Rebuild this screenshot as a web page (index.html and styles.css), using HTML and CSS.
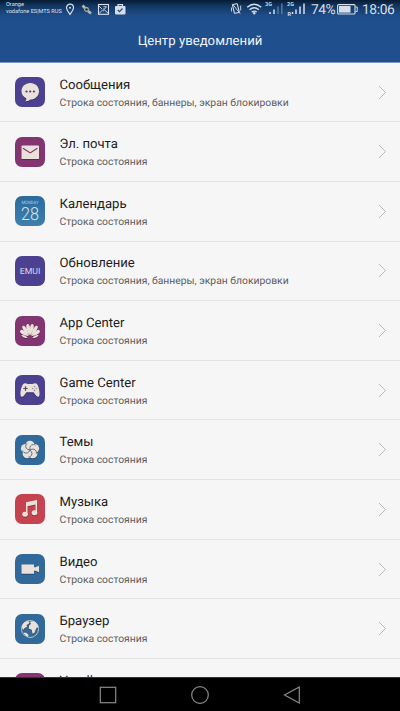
FILE: index.html
```html
<!DOCTYPE html>
<html lang="ru">
<head>
<meta charset="utf-8">
<title>Центр уведомлений</title>
<link rel="stylesheet" href="styles.css">
</head>
<body>
<div class="phone">
  <header class="header">
    <div class="status">
      <div class="carrier"><span>Orange</span><span>vodafone ES|MTS RUS</span></div>
      <svg class="left-icons" width="64" height="16" viewBox="0 0 64 16" fill="none" stroke="#d5deea">
        <path d="M5 13.500C3.300 11 1.500 9 1.500 6.700a3.500 3.500 0 0 1 7 0C8.500 9 6.700 11 5 13.500z" stroke-width="1.200"/>
        <circle cx="5" cy="6.700" r="1" fill="#d5deea" stroke="none"/>
        <path d="M17.500 4.500l2.500 2.500M23 10l3 2.500" stroke="#b9b6ad" stroke-width="2.600"/>
        <circle cx="21.500" cy="8.500" r="1.900" fill="#242e3d" stroke="#b9b6ad" stroke-width="1.100"/>
        <rect x="33.500" y="3.500" width="10" height="9.800" stroke-width="1.100"/>
        <path d="M34 12.500l3.500-3.500 1.500 1.200M39 8.500l4 3.500M34 5l3 3M38 8h1.500l2-2.300h-3" stroke-width=".9"/>
        <rect x="50" y="5" width="10.500" height="8.500" rx="1" fill="#d5deea" stroke="none"/>
        <path d="M53 5V3.700h4.500V5" stroke-width="1.200"/>
        <path d="M52.800 9l1.700 1.700 3-3.200" stroke="#204b85" stroke-width="1.200"/>
      </svg>
      <svg class="right-icons" width="78" height="18" viewBox="0 0 78 18" fill="none" stroke="#d5deea">
        <rect x="3.500" y="4" width="5" height="9" rx="1" transform="rotate(-14 6 9)" stroke-width="1.100"/>
        <path d="M1.500 7.500v4M10.700 5.500v5M2.300 3.800l8 10" stroke-width=".9"/>
        <path d="M17.200 7.300q7-6 14 0M19.500 9.800q4.700-4 9.400 0M21.800 12.100q2.400-2 4.800 0" stroke-width="1.400"/>
        <circle cx="24.200" cy="13.300" r="1.200" fill="#d5deea" stroke="none"/>
        <g stroke-width="1.500"><path d="M40 14v-2M44 14V9.500"/><path d="M48 14V6.500M51.800 14V3.500" stroke="#5578a3"/>
        <path d="M62.500 14v-2M66 14V9.500M70 14V6.500M74 14V3.500"/></g>
        <g class="net"><text x="35" y="6">3G</text><text x="57" y="6">2G</text><text x="57.500" y="15.500">R</text></g>
      </svg>
      <span class="percent">74%</span>
      <svg class="battery" width="21" height="12" viewBox="0 0 21 12"><rect x=".6" y="1.600" width="17.400" height="9.400" rx="1" fill="none" stroke="#d5deea" stroke-width="1.100"/><path d="M2 3h11.500v6.600H2z" fill="#d5deea"/><path d="M18.500 4h1.700v4.500h-1.700" fill="none" stroke="#d5deea"/></svg>
      <span class="clock">18:06</span>
    </div>
    <h1 class="title">Центр уведомлений</h1>
  </header>

  <main class="list">
    <div class="row">
      <svg class="app violet" viewBox="0 0 30 30"><path class="art" d="M15.300 6c5 0 8.700 3.600 8.700 8.200s-3.900 8.300-8.700 8.300c-1 1-3 2-5 1.700 1-1 1.200-2 .9-3C8.300 19.800 6.500 17.300 6.500 14.200 6.500 9.600 10.300 6 15.300 6z"/><g fill="#463b75"><circle cx="11.500" cy="14.500" r="1.100"/><circle cx="15.200" cy="14.500" r="1.100"/><circle cx="18.900" cy="14.500" r="1.100"/></g></svg>
      <div class="text"><div class="name">Сообщения</div><div class="desc">Строка состояния, баннеры, экран блокировки</div></div>
      <svg class="arrow" viewBox="0 0 9 15"><path d="M1 1l6.500 6.500L1 14"/></svg>
    </div>
    <div class="row">
      <svg class="app plum" viewBox="0 0 30 30"><rect class="art" x="6.500" y="8.500" width="17.500" height="13.500" rx=".6"/><path d="M8 11.200l7.200 4.700 7.200-4.700" fill="none" stroke="#80336c" stroke-width="1.200"/></svg>
      <div class="text"><div class="name">Эл. почта</div><div class="desc">Строка состояния</div></div>
      <svg class="arrow" viewBox="0 0 9 15"><path d="M1 1l6.500 6.500L1 14"/></svg>
    </div>
    <div class="row">
      <svg class="app sky" viewBox="0 0 30 30"><text class="weekday" x="15" y="8" textLength="17" lengthAdjust="spacingAndGlyphs">MONDAY</text><text class="day" x="15" y="24.300" textLength="18" lengthAdjust="spacingAndGlyphs">28</text></svg>
      <div class="text"><div class="name">Календарь</div><div class="desc">Строка состояния</div></div>
      <svg class="arrow" viewBox="0 0 9 15"><path d="M1 1l6.500 6.500L1 14"/></svg>
    </div>
    <div class="row">
      <svg class="app violet" viewBox="0 0 30 30"><g fill="none" stroke="#ddd7e6"><text class="emui" x="15" y="18.300" textLength="20.500" lengthAdjust="spacingAndGlyphs">EMUI</text></g></svg>
      <div class="text"><div class="name">Обновление</div><div class="desc">Строка состояния, баннеры, экран блокировки</div></div>
      <svg class="arrow" viewBox="0 0 9 15"><path d="M1 1l6.500 6.500L1 14"/></svg>
    </div>
    <div class="row">
      <svg class="app plum" viewBox="0 0 30 30"><g class="art"><path id="petal" d="M15 19.500C13.200 14.500 12.600 10 14 8.200q1-1 2 0C17.400 10 16.800 14.500 15 19.500z" transform="rotate(-11 15 21)"/><path d="M15 19.500C13.200 14.500 12.600 10 14 8.200q1-1 2 0C17.400 10 16.800 14.500 15 19.500z" transform="rotate(11 15 21)"/><use href="#petal" transform="rotate(-22 15 21)"/><use href="#petal" transform="rotate(44 15 21)"/><g transform="rotate(-56 15 21)"><path d="M15 19.500c-2.400-4.500-2.500-8-1.300-9.700q1.300-.9 2.600 0c1.200 1.700 1.100 5.200-1.300 9.700z"/></g><g transform="rotate(56 15 21)"><path d="M15 19.500c-2.400-4.500-2.500-8-1.300-9.700q1.300-.9 2.600 0c1.200 1.700 1.100 5.200-1.300 9.700z"/></g><path d="M12.800 21.800c-3 .4-5.500-.6-6.500-2.800 2.500-.3 5 .8 6.500 2.800zM17.200 21.800c3 .4 5.500-.6 6.500-2.800-2.500-.3-5 .8-6.500 2.800z"/></g></svg>
      <div class="text"><div class="name">App Center</div><div class="desc">Строка состояния</div></div>
      <svg class="arrow" viewBox="0 0 9 15"><path d="M1 1l6.500 6.500L1 14"/></svg>
    </div>
    <div class="row">
      <svg class="app violet" viewBox="0 0 30 30"><path class="art" d="M9 8.500q2-.7 3.500.5h5.200q1.500-1.200 3.500-.5c2 .6 3.800 8 3.300 11.500-.4 2.300-2.200 2.300-3.300.8l-2.700-3.600h-7L8.800 20.800c-1.100 1.500-2.900 1.500-3.300-.8C5 16.500 7 9.100 9 8.500z"/><path d="M10.500 11.300v4.400M8.300 13.500h4.400" stroke="#50457f" stroke-width="1.200"/><g fill="#9d929d"><circle cx="19.500" cy="11.600" r=".8"/><circle cx="19.500" cy="15.400" r=".8"/><circle cx="17.600" cy="13.500" r=".8"/><circle cx="21.400" cy="13.500" r=".8"/></g></svg>
      <div class="text"><div class="name">Game Center</div><div class="desc">Строка состояния</div></div>
      <svg class="arrow" viewBox="0 0 9 15"><path d="M1 1l6.500 6.500L1 14"/></svg>
    </div>
    <div class="row">
      <svg class="app blue" viewBox="0 0 30 30"><g class="art"><circle cx="15" cy="10.300" r="4.600"/><circle cx="19.500" cy="13.500" r="4.600"/><circle cx="17.800" cy="18.700" r="4.600"/><circle cx="12.200" cy="18.700" r="4.600"/><circle cx="10.500" cy="13.500" r="4.600"/></g><g fill="none" stroke="#587389" stroke-width=".9"><path id="swirl" d="M15 15q-1-5 3.500-5.500q1.500 0 2 .8"/><use href="#swirl" transform="rotate(72 15 15)"/><use href="#swirl" transform="rotate(144 15 15)"/><use href="#swirl" transform="rotate(216 15 15)"/><use href="#swirl" transform="rotate(288 15 15)"/></g></svg>
      <div class="text"><div class="name">Темы</div><div class="desc">Строка состояния</div></div>
      <svg class="arrow" viewBox="0 0 9 15"><path d="M1 1l6.500 6.500L1 14"/></svg>
    </div>
    <div class="row">
      <svg class="app red" viewBox="0 0 30 30"><g class="art"><path d="M11 8.200l11-2.200v13h-1.500v-8.500l-8 1.700v8.500H11z"/><ellipse cx="10" cy="20.200" rx="2.800" ry="2.500"/><ellipse cx="19.500" cy="18.700" rx="2.800" ry="2.500"/></g></svg>
      <div class="text"><div class="name">Музыка</div><div class="desc">Строка состояния</div></div>
      <svg class="arrow" viewBox="0 0 9 15"><path d="M1 1l6.500 6.500L1 14"/></svg>
    </div>
    <div class="row">
      <svg class="app blue" viewBox="0 0 30 30"><path class="art" d="M6.500 10.500H19v2.800l1.500-.1 3.500-1.500v6.600l-3.500-1.500-1.500-.1v3H6.500z"/></svg>
      <div class="text"><div class="name">Видео</div><div class="desc">Строка состояния</div></div>
      <svg class="arrow" viewBox="0 0 9 15"><path d="M1 1l6.500 6.500L1 14"/></svg>
    </div>
    <div class="row">
      <svg class="app blue" viewBox="0 0 30 30"><circle cx="15" cy="15" r="8.500" fill="#396991" stroke="#b5c3ca" stroke-width="1"/><path class="art" d="M7 12c1-3 3.500-4.700 6-5l1.500 1-1 2-2 1 .5 2-2.500 1-1 2L7 14zM15.500 7.500l3.500-.2c2.800 1.500 4.500 4 4.500 7l-1.500-1-1 1.500-1.500 4-2 1-.8-4-2.700-1v-3l2-2-.8-1zM8.500 18.500l3 .5 2 2-.5 2C11 22.500 9.500 21 8.500 18.500z"/></svg>
      <div class="text"><div class="name">Браузер</div><div class="desc">Строка состояния</div></div>
      <svg class="arrow" viewBox="0 0 9 15"><path d="M1 1l6.500 6.500L1 14"/></svg>
    </div>
    <div class="row last">
      <svg class="app plum" viewBox="0 0 30 30"></svg>
      <div class="text"><div class="name">Vmall</div></div>
    </div>
  </main>

  <nav class="nav">
    <svg viewBox="0 0 18 18"><rect x="1.300" y="1.300" width="15.400" height="15.400"/></svg>
    <svg viewBox="0 0 18 18"><circle cx="9" cy="9" r="8.300"/></svg>
    <svg viewBox="0 0 18 18"><path d="M16.300 1v16L1.500 9z"/></svg>
  </nav>
</div>
</body>
</html>
```
FILE: styles.css
```css
* { box-sizing: border-box; }
body { margin: 0; font-family: Roboto, "Noto Sans", sans-serif; text-rendering: geometricPrecision; }
.phone { width: 400px; height: 711px; display: flex; flex-direction: column; overflow: hidden; background: #f6f6f6; }
.header { height: 62.700px; flex: none; background: linear-gradient(#061b35 0, #123762 6px, #1e4c87 15px, #204f8d 22px); color: #f1f5fa; border-bottom: 1px solid #7c98bd; }
.status { height: 18px; display: flex; align-items: center; white-space: nowrap; }
.carrier { width: 65px; padding-left: 6px; flex: none; display: flex; flex-direction: column; font-size: 5.600px; line-height: 7.500px; color: #dbe3ed; }
.left-icons { flex: none; }
.right-icons { margin-left: 101px; flex: none; }
.net { font-size: 5.500px; font-weight: 700; fill: #d5deea; stroke: none; }
.percent { font-size: 13.800px; letter-spacing: -.5px; width: 29px; margin-left: 3px; padding-top: 2px; flex: none; color: #d5deea; }
.battery { flex: none; margin-left: -3px; }
.clock { font-size: 13.800px; letter-spacing: -.4px; margin-left: 4px; padding-top: 2px; color: #d5deea; }
.title { margin: 13px 0 0; font-size: 13.200px; line-height: 22px; font-weight: 400; text-align: center; }
.list { flex: 1; min-height: 0; overflow: hidden; }
.row { height: 59.630px; display: flex; align-items: center; padding: 0 13px 0 15px; border-bottom: 1px solid #e3e3e3; }
.app { width: 30px; height: 30px; border-radius: 7px; flex: none; }
.violet { background: #4b4190; }
.plum { background: #833571; }
.sky { background: linear-gradient(#2a6a9f, #4080ac); }
.blue { background: #32699b; }
.red { background: #c4434e; }
.art { fill: #e9e1da; filter: drop-shadow(0 1px .5px #0004); }
.weekday { font-size: 4.500px; fill: #b4cbdc; text-anchor: middle; }
.day { font-size: 18px; font-weight: 300; fill: #dce5e9; text-anchor: middle; }
.emui { font-size: 8.600px; fill: #ddd7e6; stroke: none; text-anchor: middle; }
.text { flex: 1; margin-left: 14.500px; padding-top: 3px; white-space: nowrap; }
.name { font-size: 13.100px; line-height: 18px; color: #1d1d1d; }
.desc { font-size: 10.350px; line-height: 16px; color: #5d5d5d; }
.last { align-items: flex-start; padding-top: 14.500px; }
.last .text { padding-top: 0; }
.arrow { width: 9px; height: 15px; fill: none; stroke: #b9b9b9; stroke-width: 1; }
.nav { height: 34px; flex: none; background: #000; border-top: 1px solid #333; display: flex; justify-content: center; align-items: center; gap: 74px; }
.nav svg { width: 18px; height: 18px; fill: none; stroke: #898989; stroke-width: 1.200; }
```
